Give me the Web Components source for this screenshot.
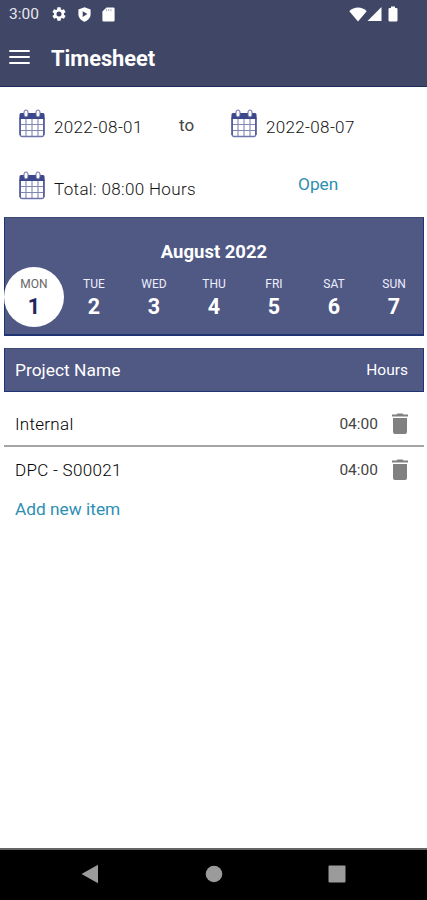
<!DOCTYPE html>
<html lang="en">
<head>
<meta charset="utf-8">
<title>Timesheet</title>
<style>
    html, body {
        margin: 0;
        height: 100%;
        background: #fff;
        font-family: Roboto, "Liberation Sans", sans-serif;
    }
</style>
</head>
<body>
<timesheet-app></timesheet-app>

<script>
class AppIcon extends HTMLElement {
    static get icons() {
        return {
            gear: ['0 0 24 24', '<path fill="currentColor" d="M19.43 12.98c.04-.32.07-.64.07-.98s-.03-.66-.07-.98l2.11-1.65c.19-.15.24-.42.12-.64l-2-3.46c-.12-.22-.39-.3-.61-.22l-2.49 1c-.52-.4-1.08-.73-1.69-.98l-.38-2.65A.49.49 0 0 0 14 2h-4c-.25 0-.46.18-.49.42l-.38 2.65c-.61.25-1.17.59-1.69.98l-2.49-1c-.23-.09-.49 0-.61.22l-2 3.46c-.13.22-.07.49.12.64l2.11 1.65c-.04.32-.07.65-.07.98s.03.66.07.98l-2.11 1.65c-.19.15-.24.42-.12.64l2 3.46c.12.22.39.3.61.22l2.49-1c.52.4 1.08.73 1.69.98l.38 2.65c.03.24.24.42.49.42h4c.25 0 .46-.18.49-.42l.38-2.65c.61-.25 1.17-.59 1.69-.98l2.49 1c.23.09.49 0 .61-.22l2-3.46c.12-.22.07-.49-.12-.64zM12 15.8a3.8 3.8 0 1 1 0-7.6 3.8 3.8 0 0 1 0 7.6z"/>'],
            shield: ['0 0 13 15', '<path fill="currentColor" fill-rule="evenodd" d="M6.5.3 12.6 2.6v4.6c0 3.3-2.6 6.2-6.1 7.5C3 13.4.4 10.5.4 7.2V2.6zM4.7 4.3v5.6l4.7-2.8z"/>'],
            card: ['0 0 13 15', '<path fill="currentColor" d="M4.5.5h6.8a1.3 1.3 0 0 1 1.3 1.3v11.4a1.3 1.3 0 0 1-1.3 1.3H1.7A1.3 1.3 0 0 1 .4 13.2V4.6z"/><path stroke="#a9abc0" d="M4.5 2.2v2M6.7 2.2v2M8.900 2.2v2"/>'],
            wifi: ['0 0 18 15', '<path fill="currentColor" d="M9 14.4.3 4.2C5-.7 13-.7 17.700 4.2z"/>'],
            signal: ['0 0 15 14', '<path fill="currentColor" d="M14.500 0v14H.5z"/>'],
            battery: ['0 0 10 16', '<path fill="currentColor" d="M3 .5h4v1.400h1.300q1.200 0 1.200 1.200v11.200q0 1.200-1.200 1.200H1.700Q.5 15.500.5 14.300V3.100q0-1.200 1.200-1.200H3z"/>'],
            menu: ['0 0 21 16', '<path stroke="currentColor" stroke-width="2.200" d="M.3 2h20.400M.3 8h20.400M.3 14h20.400"/>'],
            calendar: ['0 0 26 29', '<path fill="#fff" stroke="#6e75a8" stroke-width="1.300" d="M1.200 8v17.500q0 2 2 2h19.600q2 0 2-2V8z"/><path fill="#3d478c" d="M.5 5.500q0-1.500 1.500-1.500h22q1.500 0 1.500 1.500V10H.5z"/><path fill="none" stroke="#8187b3" stroke-width="1.100" d="M7 10v17M13 10v17M19 10v17M1 15.500h24M1 21.500h24"/><path stroke="#3d478c" stroke-width="1.200" d="M25 9v17M1 9v17"/><rect x="5" y="1" width="4" height="7" rx="2" fill="#fff" stroke="#626a9f"/><rect x="17" y="1" width="4" height="7" rx="2" fill="#fff" stroke="#626a9f"/>'],
            trash: ['0 0 16 21', '<path fill="currentColor" d="M1 5h14v14q0 2-2 2H3q-2 0-2-2zM0 1.500h4.500L5.500.4h5l1 1.100H16v1.900H0z"/>'],
            back: ['0 0 18 20', '<path fill="currentColor" d="M.5 10 17 .8v18.400z"/>'],
            home: ['0 0 18 18', '<circle cx="9" cy="9" r="8.300" fill="currentColor"/>'],
            recent: ['0 0 18 18', '<rect x=".5" y=".5" width="17" height="17" rx="1" fill="currentColor"/>']
        };
    }

    constructor() {
        super();
        this.attachShadow({ mode: 'open' });
    }

    connectedCallback() {
        const [box, shapes] = AppIcon.icons[this.getAttribute('name')];
        const [, , w, h] = box.split(' ');
        const width = this.getAttribute('width') || w;
        const height = this.getAttribute('height') || h;
        this.shadowRoot.innerHTML = `
            <style>
                :host { display: block; flex: none; width: ${width}px; height: ${height}px; }
                svg { display: block; width: 100%; height: 100%; }
            </style>
            <svg viewBox="${box}" preserveAspectRatio="none">${shapes}</svg>
        `;
    }
}

class StatusBar extends HTMLElement {
    constructor() {
        super();
        this.attachShadow({ mode: 'open' });
        this.shadowRoot.innerHTML = `
            <style>
                :host {
                    display: flex;
                    align-items: center;
                    box-sizing: border-box;
                    height: 28px;
                    padding: 0 29px 0 9px;
                    color: #fff;
                }
                .time { width: 42px; font-size: 15.5px; line-height: 28px; color: #e6e7ee; }
                .left { display: flex; align-items: center; gap: 11px; flex: 1; }
                .right { display: flex; align-items: center; }
                .right app-icon:last-child { margin-left: 6px; }
            </style>
            <span class="time"><slot></slot></span>
            <div class="left">
                <app-icon name="gear" width="16" height="16"></app-icon>
                <app-icon name="shield"></app-icon>
                <app-icon name="card"></app-icon>
            </div>
            <div class="right">
                <app-icon name="wifi"></app-icon>
                <app-icon name="signal"></app-icon>
                <app-icon name="battery"></app-icon>
            </div>
        `;
    }
}

class AppBar extends HTMLElement {
    constructor() {
        super();
        this.attachShadow({ mode: 'open' });
        this.shadowRoot.innerHTML = `
            <style>
                :host {
                    display: flex;
                    align-items: center;
                    box-sizing: border-box;
                    height: 59px;
                    padding: 0 9px 1px;
                    gap: 21px;
                    color: #fff;
                    border-bottom: 1px solid #1c2b5e;
                }
                h1 { margin: 5px 0 0; font-size: 21.8px; line-height: 28px; font-weight: 700; }
            </style>
            <app-icon name="menu"></app-icon>
            <h1><slot></slot></h1>
        `;
    }
}

class DateField extends HTMLElement {
    constructor() {
        super();
        this.attachShadow({ mode: 'open' });
        this.shadowRoot.innerHTML = `
            <style>
                :host {
                    display: flex;
                    align-items: center;
                    gap: 9px;
                    font-size: 17px;
                    font-weight: 300;
                    line-height: 24px;
                    letter-spacing: 0.35px;
                    color: #111;
                    white-space: nowrap;
                }
                span { padding-top: 7px; }
            </style>
            <app-icon name="calendar"></app-icon>
            <span><slot></slot></span>
        `;
    }
}

class WeekDay extends HTMLElement {
    constructor() {
        super();
        this.attachShadow({ mode: 'open' });
    }

    connectedCallback() {
        this.shadowRoot.innerHTML = `
            <style>
                :host {
                    display: flex;
                    flex-direction: column;
                    align-items: center;
                    box-sizing: border-box;
                    width: 60px;
                    height: 60px;
                    padding-top: 9px;
                    border-radius: 50%;
                    color: #fff;
                }
                :host([selected]) { background: #fff; color: #22265c; }
                .name { font-size: 12px; line-height: 16px; color: #eef; }
                :host([selected]) .name { color: #666; }
                .date { margin-top: 1px; font-size: 21.5px; line-height: 28px; font-weight: 700; }
            </style>
            <span class="name">${this.getAttribute('name')}</span>
            <span class="date">${this.getAttribute('date')}</span>
        `;
    }
}

class WeekStrip extends HTMLElement {
    constructor() {
        super();
        this.attachShadow({ mode: 'open' });
        this.shadowRoot.innerHTML = `
            <style>
                :host {
                    display: block;
                    box-sizing: border-box;
                    height: 119px;
                    padding-top: 22px;
                    background: #505884;
                    border: 1px solid #1f3472;
                    border-top-color: #3f4978;
                    border-bottom-width: 2px;
                }
                h2 {
                    margin: 0 0 3px;
                    font-size: 18.5px;
                    line-height: 24px;
                    font-weight: 700;
                    text-align: center;
                    color: #fff;
                }
                .days { display: flex; margin: 0 -1px; }
            </style>
            <h2><slot name="month"></slot></h2>
            <div class="days"><slot></slot></div>
        `;
    }
}

class ProjectHeader extends HTMLElement {
    constructor() {
        super();
        this.attachShadow({ mode: 'open' });
        this.shadowRoot.innerHTML = `
            <style>
                :host {
                    display: flex;
                    align-items: center;
                    justify-content: space-between;
                    box-sizing: border-box;
                    height: 44px;
                    padding: 0 15px 0 10px;
                    background: #505884;
                    border: 1px solid #1f3472;
                    border-top-color: #3f4978;
                    color: #fff;
                    font-size: 17.4px;
                }
                .hours { font-size: 15.5px; }
            </style>
            <span><slot></slot></span>
            <span class="hours"><slot name="hours"></slot></span>
        `;
    }
}

class ProjectRow extends HTMLElement {
    constructor() {
        super();
        this.attachShadow({ mode: 'open' });
    }

    connectedCallback() {
        this.shadowRoot.innerHTML = `
            <style>
                :host {
                    display: flex;
                    align-items: center;
                    box-sizing: border-box;
                    height: 45px;
                    padding: 0 16px 0 11px;
                    font-size: 17px;
                    font-weight: 300;
                    letter-spacing: 0.3px;
                    color: #000;
                }
                :host([divided]) { border-bottom: 2px solid #a5a5a5; }
                .name { flex: 1; padding-top: 1px; }
                .hours { font-size: 15.5px; letter-spacing: 0; margin-right: 14px; font-weight: 400; color: #444; }
                app-icon { color: #808080; }
            </style>
            <span class="name"><slot></slot></span>
            <span class="hours">${this.getAttribute('hours')}</span>
            <app-icon name="trash"></app-icon>
        `;
    }
}

class NavBar extends HTMLElement {
    constructor() {
        super();
        this.attachShadow({ mode: 'open' });
        this.shadowRoot.innerHTML = `
            <style>
                :host {
                    display: flex;
                    align-items: center;
                    justify-content: space-between;
                    box-sizing: border-box;
                    height: 52px;
                    padding: 0 81px 2px;
                    background: #000;
                    border-top: 2px solid #666;
                    color: #9b9b9b;
                }
            </style>
            <app-icon name="back"></app-icon>
            <app-icon name="home"></app-icon>
            <app-icon name="recent"></app-icon>
        `;
    }
}

class TimesheetApp extends HTMLElement {
    constructor() {
        super();
        this.attachShadow({ mode: 'open' });
        this.shadowRoot.innerHTML = `
            <style>
                :host { display: flex; flex-direction: column; height: 900px; overflow: hidden; }
                header { background: #404665; }
                main { flex: 1; padding: 0 3px 0 4px; }
                .range, .summary { display: grid; padding-left: 15px; align-items: start; }
                .range { grid-template-columns: 160px 52px 1fr; padding-top: 21px; height: 41px; }
                .summary { grid-template-columns: 279px 1fr; padding-top: 21px; height: 47px; }
                .to { font-size: 17px; line-height: 24px; padding-top: 5px; color: #444; }
                .link { font-size: 17.3px; line-height: 24px; color: #2f8fb3; }
                .summary .link { padding-top: 2px; }
                project-header { margin-top: 12px; margin-bottom: 10px; }
                .add { padding: 5px 11px; }
            </style>
            <header>
                <status-bar>3:00</status-bar>
                <app-bar>Timesheet</app-bar>
            </header>
            <main>
                <div class="range">
                    <date-field>2022-08-01</date-field>
                    <span class="to">to</span>
                    <date-field>2022-08-07</date-field>
                </div>
                <div class="summary">
                    <date-field>Total: 08:00 Hours</date-field>
                    <span class="link">Open</span>
                </div>
                <week-strip>
                    <span slot="month">August 2022</span>
                    <week-day name="MON" date="1" selected></week-day>
                    <week-day name="TUE" date="2"></week-day>
                    <week-day name="WED" date="3"></week-day>
                    <week-day name="THU" date="4"></week-day>
                    <week-day name="FRI" date="5"></week-day>
                    <week-day name="SAT" date="6"></week-day>
                    <week-day name="SUN" date="7"></week-day>
                </week-strip>
                <project-header>Project Name<span slot="hours">Hours</span></project-header>
                <project-row hours="04:00" divided>Internal</project-row>
                <project-row hours="04:00">DPC - S00021</project-row>
                <div class="link add">Add new item</div>
            </main>
            <nav-bar></nav-bar>
        `;
    }
}

customElements.define('app-icon', AppIcon);
customElements.define('status-bar', StatusBar);
customElements.define('app-bar', AppBar);
customElements.define('date-field', DateField);
customElements.define('week-day', WeekDay);
customElements.define('week-strip', WeekStrip);
customElements.define('project-header', ProjectHeader);
customElements.define('project-row', ProjectRow);
customElements.define('nav-bar', NavBar);
customElements.define('timesheet-app', TimesheetApp);
</script>
</body>
</html>
